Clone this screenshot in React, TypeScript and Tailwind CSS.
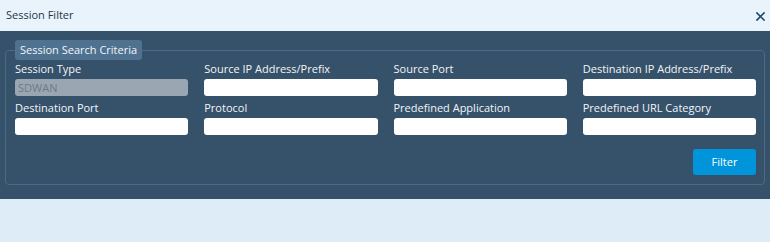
import React from 'react';

const fields: { label: string; value?: string; disabled?: boolean }[] = [
  { label: 'Session Type', value: 'SDWAN', disabled: true },
  { label: 'Source IP Address/Prefix' },
  { label: 'Source Port' },
  { label: 'Destination IP Address/Prefix' },
  { label: 'Destination Port' },
  { label: 'Protocol' },
  { label: 'Predefined Application' },
  { label: 'Predefined URL Category' },
];

export default function App() {
  return (
    <div className="w-[770px] h-[242px] bg-[#ddecf7] font-['Open_Sans',sans-serif] text-[11px]">
      <header className="h-[31px] bg-[#e9f3fc] flex items-center justify-between pl-[6px] pr-[5px]">
        <span className="text-[11px] text-[#1c3549]">Session Filter</span>
        <button className="text-[#1f4e73] pt-[1px]">
          <svg width="9" height="9" viewBox="0 0 9 9" stroke="currentColor" strokeWidth="1.7" strokeLinecap="square">
            <path d="M1 1 L8 8 M8 1 L1 8" />
          </svg>
        </button>
      </header>

      <div className="bg-[#36516a] pt-[9px] pb-[14px] px-[5px]">
        <fieldset className="border border-[#4d6983] rounded-[4px] pl-[9px] pr-[8px] pb-[9px]">
          <legend className="bg-[#4e7290] text-[#f2f5f8] rounded-[3px] px-[5px] h-[20px] leading-[20px]">
            Session Search Criteria
          </legend>
          <div className="grid grid-cols-4 gap-x-4 gap-y-1 mt-[1px]">
            {fields.map((f) => (
              <div key={f.label} className="flex flex-col">
                <label className="text-[#f2f5f8] leading-4 h-4 whitespace-nowrap">{f.label}</label>
                <input
                  readOnly
                  disabled={f.disabled}
                  defaultValue={f.value ?? ''}
                  className={`mt-[2px] h-[17px] rounded-[3px] px-[3px] text-[11px] outline-none ${
                    f.disabled ? 'bg-[#9aa7b2] text-[#6b7b89]' : 'bg-white text-[#333]'
                  }`}
                />
              </div>
            ))}
          </div>
          <div className="flex justify-end mt-[14px]">
            <button className="w-[63px] h-[26px] rounded-[3px] bg-[#0095da] text-white text-[11px]">Filter</button>
          </div>
        </fieldset>
      </div>
    </div>
  );
}
